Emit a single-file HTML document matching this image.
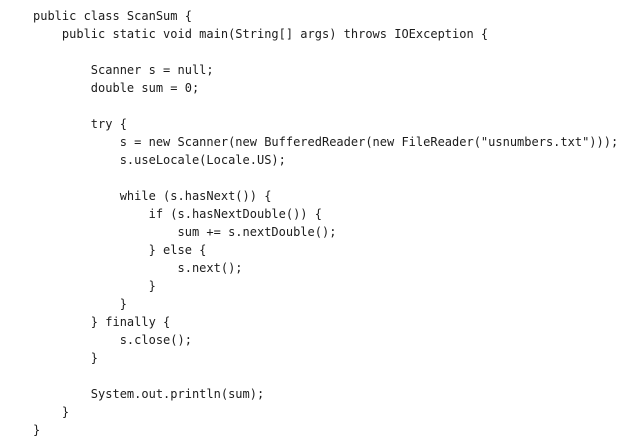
<!DOCTYPE html>
<html><head><meta charset="utf-8"><style>
html,body{margin:0;padding:0;background:#fff;width:642px;height:439px;overflow:hidden}
pre{margin:0;position:absolute;left:33px;top:7px;font-family:"DejaVu Sans Mono","Liberation Mono",monospace;font-size:12px;line-height:18px;color:#1c1c1c}
</style></head><body>
<pre>public class ScanSum {
    public static void main(String[] args) throws IOException {

        Scanner s = null;
        double sum = 0;

        try {
            s = new Scanner(new BufferedReader(new FileReader("usnumbers.txt")));
            s.useLocale(Locale.US);

            while (s.hasNext()) {
                if (s.hasNextDouble()) {
                    sum += s.nextDouble();
                } else {
                    s.next();
                }
            }
        } finally {
            s.close();
        }

        System.out.println(sum);
    }
}</pre>
</body></html>
